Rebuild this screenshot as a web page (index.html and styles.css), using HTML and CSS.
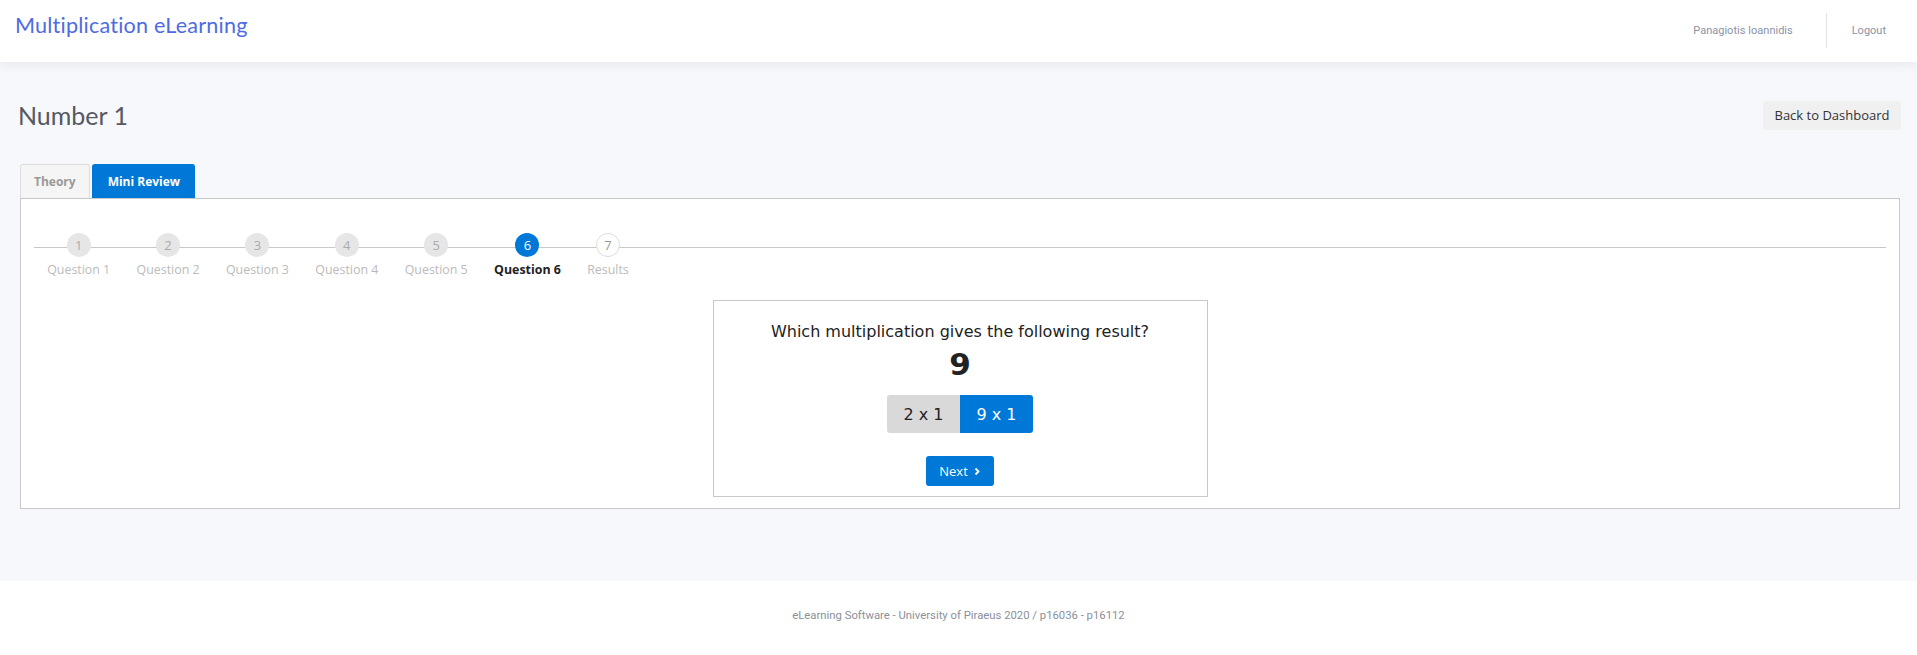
FILE: index.html
```html
<!DOCTYPE html>
<html>
<head>
<meta charset="utf-8">
<title>Multiplication eLearning</title>
<link rel="stylesheet" href="styles.css">
</head>
<body>
<header class="topbar">
  <a class="brand">Multiplication eLearning</a>
  <nav class="usernav">
    <span class="user">Panagiotis Ioannidis</span>
    <span class="divider"></span>
    <a class="logout">Logout</a>
  </nav>
</header>
<main class="main">
  <div class="title-row">
    <h1 class="page-title">Number 1</h1>
    <button class="btn-back">Back to Dashboard</button>
  </div>
  <div class="tabs">
    <div class="tab">Theory</div>
    <div class="tab active">Mini Review</div>
  </div>
  <section class="panel">
    <div class="stepper">
      <div class="step"><span class="dot">1</span><span class="label">Question 1</span></div>
      <div class="step"><span class="dot">2</span><span class="label">Question 2</span></div>
      <div class="step"><span class="dot">3</span><span class="label">Question 3</span></div>
      <div class="step"><span class="dot">4</span><span class="label">Question 4</span></div>
      <div class="step"><span class="dot">5</span><span class="label">Question 5</span></div>
      <div class="step current"><span class="dot">6</span><span class="label">Question 6</span></div>
      <div class="step todo"><span class="dot">7</span><span class="label">Results</span></div>
    </div>
    <div class="card">
      <p class="question">Which multiplication gives the following result?</p>
      <div class="result">9</div>
      <div class="choices">
        <button class="choice">2 x 1</button>
        <button class="choice selected">9 x 1</button>
      </div>
      <button class="btn-next">Next <svg width="8" height="9" viewBox="0 0 8 9"><path d="M2.5 1.5 L5.5 4.5 L2.5 7.5" fill="none" stroke="#fff" stroke-width="1.8"/></svg></button>
    </div>
  </section>
</main>
<footer class="footer">eLearning Software - University of Piraeus 2020 / p16036 - p16112</footer>
</body>
</html>
```
FILE: styles.css
```css
* { box-sizing: border-box; }
html, body { margin: 0; padding: 0; }
body {
  background: #f7f8fc;
  font-family: "Open Sans", sans-serif;
  color: #333;
}
.topbar {
  height: 62px;
  background: #fff;
  box-shadow: 0 2px 12px rgba(0, 0, 0, 0.08);
  display: flex;
  align-items: flex-start;
  justify-content: space-between;
  padding: 0 31px 0 15px;
  position: relative;
}
.brand {
  font-family: "Lato", sans-serif;
  font-size: 21.6px;
  color: #4f6be3;
  margin-top: 12px;
  letter-spacing: 0.2px;
}
.usernav {
  display: flex;
  align-items: center;
  height: 62px;
  padding-bottom: 2px;
  font-family: Roboto, sans-serif;
  font-size: 11px;
  color: #8b93a7;
}
.divider {
  width: 1px;
  height: 35px;
  background: #e2e4ea;
  margin: 0 25px 0 33px;
}
.main {
  padding: 37px 16px 64px 18px;
  height: 519px;
}
.title-row {
  display: flex;
  justify-content: space-between;
  align-items: center;
}
.page-title {
  margin: 0;
  font-family: "Lato", sans-serif;
  font-weight: 400;
  font-size: 25px;
  color: #555962;
  line-height: 32px;
}
.btn-back {
  font-family: "Open Sans", sans-serif;
  font-size: 13px;
  color: #333;
  background: #f0f0f0;
  border: 0;
  border-radius: 3px;
  height: 29px;
  width: 138px;
  padding: 0;
}
.tabs {
  display: flex;
  gap: 2px;
  margin-top: 33px;
  padding-left: 2px;
}
.tab {
  height: 34px;
  padding: 0 13px;
  display: flex;
  align-items: center;
  font-size: 12px;
  font-weight: 700;
  color: #999;
  background: #f5f5f5;
  border: 1px solid #ddd;
  border-bottom: 0;
  border-radius: 3px 3px 0 0;
}
.tab.active {
  background: #0078d7;
  border-color: #0078d7;
  color: #fff;
  padding: 0 14px 0 15px;
}
.panel {
  margin: 0 1px 0 2px;
  background: #fff;
  border: 1px solid #c8c8c8;
  padding: 0 13px 10px;
  height: 311px;
}
.stepper {
  display: flex;
  padding-top: 34px;
  background: linear-gradient(#c8c8c8, #c8c8c8) no-repeat 0 48px / 100% 1px;
}
.step {
  display: flex;
  flex-direction: column;
  align-items: center;
  padding: 0 13.2px;
}
.dot {
  width: 24px;
  height: 24px;
  border-radius: 50%;
  background: #e6e6e6;
  color: #aaa;
  font-size: 13px;
  display: flex;
  align-items: center;
  justify-content: center;
  position: relative;
}
.label {
  margin-top: 3px;
  font-size: 12.4px;
  color: #bbb;
  line-height: 20px;
  white-space: nowrap;
}
.step.current .dot { background: #0078d7; color: #fff; }
.step.current .label { color: #222; font-weight: 700; }
.step.todo .dot { background: #fff; border: 1px solid #ddd; color: #999; }
.card {
  width: 495px;
  margin: 20px auto 0;
  border: 1px solid #c8c8c8;
  display: flex;
  flex-direction: column;
  align-items: center;
  padding: 21px 0 9px;
  height: 197px;
}
.question {
  margin: 0;
  font-family: "DejaVu Sans", sans-serif;
  font-size: 16px;
  color: #222;
  line-height: 20px;
}
.result {
  font-family: "DejaVu Sans", sans-serif;
  font-size: 31px;
  font-weight: 700;
  color: #222;
  line-height: 36px;
  margin-top: 4px;
}
.choices {
  display: flex;
  margin-top: 13px;
}
.choice {
  width: 73px;
  height: 38px;
  border: 0;
  padding: 0;
  font-family: "DejaVu Sans", sans-serif;
  font-size: 16px;
  background: #d9d9d9;
  color: #222;
  border-radius: 3px 0 0 3px;
}
.choice.selected {
  background: #0078d7;
  color: #fff;
  border-radius: 0 3px 3px 0;
}
.btn-next {
  margin-top: 23px;
  width: 68px;
  height: 30px;
  border: 0;
  border-radius: 3px;
  background: #0078d7;
  color: #fff;
  font-family: "Open Sans", sans-serif;
  font-size: 13px;
  display: flex;
  align-items: center;
  justify-content: center;
  gap: 5px;
  padding: 0;
}
.footer {
  background: #fff;
  height: 74px;
  display: flex;
  justify-content: center;
  align-items: center;
  padding-bottom: 5px;
  font-family: Roboto, sans-serif;
  font-size: 11.3px;
  color: #8b8f9b;
}
```
